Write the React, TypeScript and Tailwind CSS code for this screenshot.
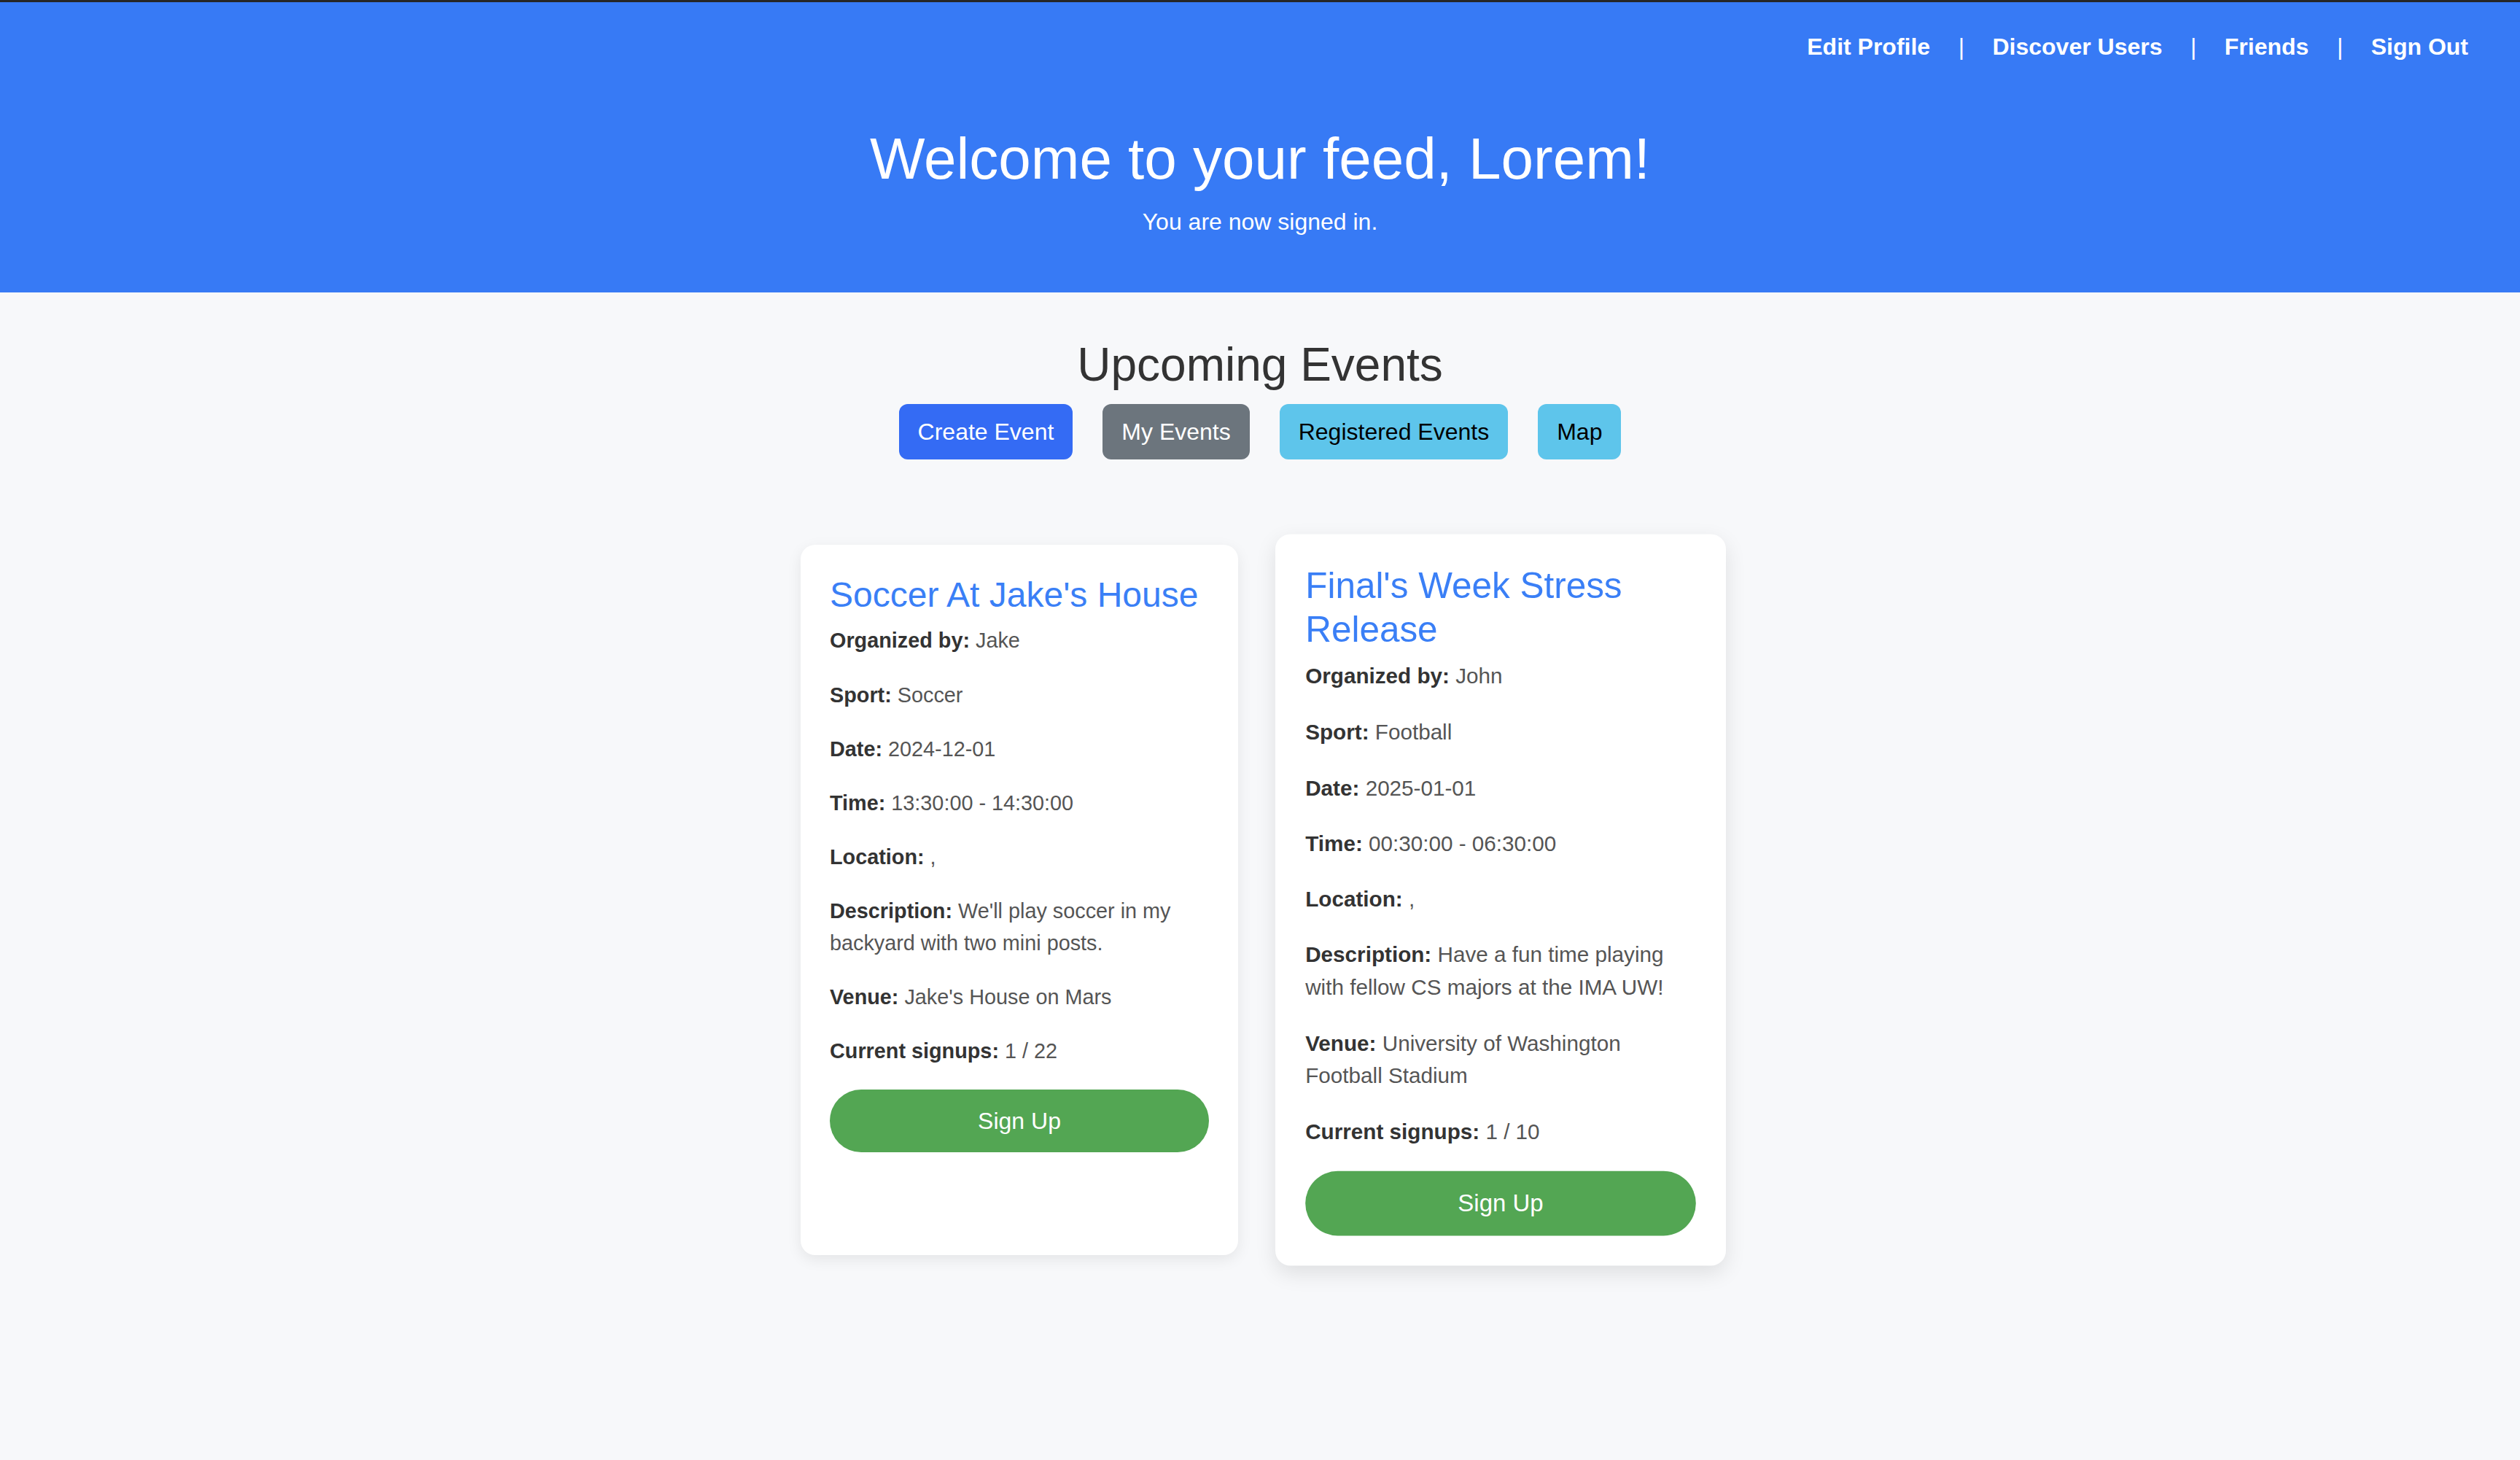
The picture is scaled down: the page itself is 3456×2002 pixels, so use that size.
const events = [
  {
    title: "Soccer At Jake's House",
    organizer: 'Jake',
    sport: 'Soccer',
    date: '2024-12-01',
    time: '13:30:00 - 14:30:00',
    location: ',',
    description: "We'll play soccer in my backyard with two mini posts.",
    venue: "Jake's House on Mars",
    signups: '1 / 22',
    hovered: false,
  },
  {
    title: "Final's Week Stress Release",
    organizer: 'John',
    sport: 'Football',
    date: '2025-01-01',
    time: '00:30:00 - 06:30:00',
    location: ',',
    description: 'Have a fun time playing with fellow CS majors at the IMA UW!',
    venue: 'University of Washington Football Stadium',
    signups: '1 / 10',
    hovered: true,
  },
];

function Detail({ label, value }: { label: string; value: string }) {
  return (
    <p className="mb-[31px] text-[28.8px] leading-[43.2px] text-[#555]">
      <strong className="font-bold text-[#333]">{label}:</strong> {value}
    </p>
  );
}

function EventCard({ ev }: { ev: (typeof events)[0] }) {
  return (
    <div
      className={`flex w-[600px] flex-col rounded-[20px] bg-white p-[40px] ${
        ev.hovered
          ? 'scale-[1.03] shadow-[0_10px_28px_rgba(0,0,0,0.1)]'
          : 'shadow-[0_6px_20px_rgba(0,0,0,0.08)]'
      }`}
    >
      <h3 className="mb-[13px] text-[48px] leading-[57.6px] text-[#3a7ff6]">{ev.title}</h3>
      <Detail label="Organized by" value={ev.organizer} />
      <Detail label="Sport" value={ev.sport} />
      <Detail label="Date" value={ev.date} />
      <Detail label="Time" value={ev.time} />
      <Detail label="Location" value={ev.location} />
      <Detail label="Description" value={ev.description} />
      <Detail label="Venue" value={ev.venue} />
      <Detail label="Current signups" value={ev.signups} />
      <button className="h-[86px] w-full rounded-full bg-[#53a653] text-[32px] text-white">
        Sign Up
      </button>
    </div>
  );
}

export default function App() {
  const links = ['Edit Profile', 'Discover Users', 'Friends', 'Sign Out'];

  return (
    <div className="min-h-screen bg-[#f7f8fa] font-['Liberation_Sans',Arial,sans-serif]">
      <div className="h-[3px] bg-[#262626]" />
      <header className="bg-[#377af5] pb-[73px] text-white">
        <nav className="flex items-center justify-end gap-[38.5px] pr-[71px] pt-[43px] text-[32px] font-bold leading-[37px]">
          {links.map((l, i) => (
            <div key={l} className="flex items-center gap-[38.5px]">
              {i > 0 && <span className="font-normal">|</span>}
              <a href="#">{l}</a>
            </div>
          ))}
        </nav>
        <h1 className="mt-[87px] text-center text-[80px] leading-[96px]">
          Welcome to your feed, Lorem!
        </h1>
        <p className="mt-[14px] text-center text-[32px] leading-[48px]">You are now signed in.</p>
      </header>

      <main className="flex flex-col items-center pb-[200px]">
        <h2 className="mt-[61px] text-[64px] leading-[76.8px] text-[#333]">Upcoming Events</h2>
        <div className="mt-[15px] flex gap-[41px] text-[32px]">
          <button className="h-[76px] rounded-[12px] bg-[#346bf4] px-[26px] text-white">Create Event</button>
          <button className="h-[76px] rounded-[12px] bg-[#6c757d] px-[26px] text-white">My Events</button>
          <button className="h-[76px] rounded-[12px] bg-[#5ec5eb] px-[26px] text-black">Registered Events</button>
          <button className="h-[76px] rounded-[12px] bg-[#5ec5eb] px-[26px] text-black">Map</button>
        </div>

        <div className="mt-[117px] flex items-stretch gap-[60px]">
          {events.map((ev) => (
            <EventCard key={ev.title} ev={ev} />
          ))}
        </div>
      </main>
    </div>
  );
}
